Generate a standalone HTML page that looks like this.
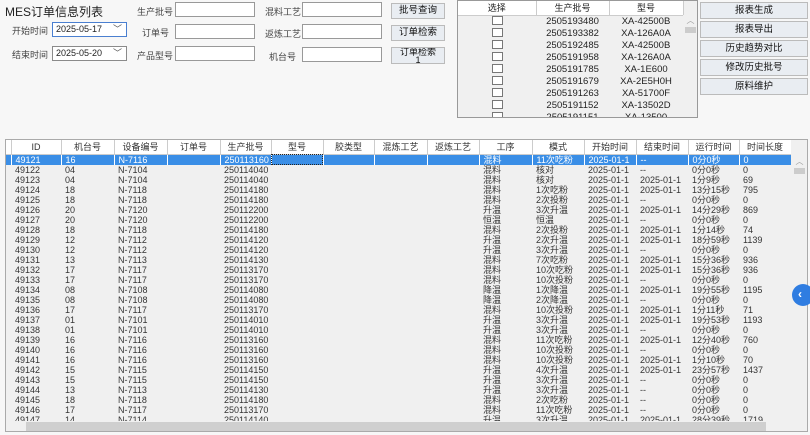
<!DOCTYPE html>
<html><head><meta charset="utf-8"><style>
*{box-sizing:border-box;margin:0;padding:0}
body{width:810px;height:435px;overflow:hidden;background:#f7f7f7;font-family:"Liberation Sans","Noto Sans CJK SC",sans-serif;font-size:9px;color:#222;position:relative}
.a{position:absolute}
.lbl{position:absolute;font-size:9px;color:#444}
.inp{position:absolute;background:#fff;border:1px solid #999;height:15px}
.btn{position:absolute;background:#e9edf2;border:1px solid #bbb;font-size:9.5px;text-align:center;line-height:14px;color:#111}
.cb{position:absolute;background:#fff;border:1px solid #8a8a8a;height:15px;font-size:9px;line-height:13px;padding-left:3px}
.cb span{position:absolute;right:4px;top:0;color:#555}
table{border-collapse:collapse;table-layout:fixed}
.g td{height:10px;line-height:10px;font-size:9px;white-space:nowrap;overflow:hidden;padding-left:4px;color:#333}
.g th{height:14px;font-weight:normal;font-size:9px;border-right:1px solid #ccc;border-bottom:1px solid #ccc;background:#fff;color:#333}
.g tr.s td{background:#3a8ee6;color:#fff;border-right:1px solid #fff}
.l td{height:12px;line-height:12px;font-size:9.5px;text-align:center;color:#222}
.l th{height:14px;font-weight:normal;font-size:9px;border-right:1px solid #ccc;border-bottom:1px solid #ccc;background:#fff}
.chk{display:inline-block;width:11px;height:9px;border:1px solid #777;background:#fff;vertical-align:middle}
</style></head><body>
<div class="a" style="left:5px;top:3px;font-size:12px;color:#222">MES订单信息列表</div>
<div class="lbl" style="left:12px;top:24px">开始时间</div>
<div class="lbl" style="left:12px;top:48px">结束时间</div>
<div class="cb" style="left:52px;top:22px;width:75px;border-color:#4a7fd0">2025-05-17<span>﹀</span></div>
<div class="cb" style="left:52px;top:46px;width:75px">2025-05-20<span>﹀</span></div>
<div class="lbl" style="left:137px;top:5px">生产批号</div>
<div class="lbl" style="left:142px;top:26px">订单号</div>
<div class="lbl" style="left:137px;top:49px">产品型号</div>
<div class="inp" style="left:175px;top:2px;width:80px"></div>
<div class="inp" style="left:175px;top:24px;width:80px"></div>
<div class="inp" style="left:175px;top:46px;width:80px"></div>
<div class="lbl" style="left:265px;top:5px">混料工艺</div>
<div class="lbl" style="left:265px;top:27px">返炼工艺</div>
<div class="lbl" style="left:269px;top:50px">机台号</div>
<div class="inp" style="left:302px;top:2px;width:80px"></div>
<div class="inp" style="left:302px;top:24px;width:80px"></div>
<div class="inp" style="left:302px;top:47px;width:80px"></div>
<div class="btn" style="left:391px;top:3px;width:54px;height:16px">批号查询</div>
<div class="btn" style="left:391px;top:25px;width:54px;height:16px">订单检索</div>
<div class="btn" style="left:391px;top:47px;width:54px;height:17px;line-height:8px;font-size:9px;overflow:hidden">订单检索<br>1</div>

<div class="a" style="left:457px;top:0;width:241px;height:118px;background:#f0f0f0;border:1px solid #999;overflow:hidden">
<table class="l" style="width:225px"><colgroup><col style="width:78px"><col style="width:73px"><col style="width:74px"></colgroup>
<tr><th>选择</th><th>生产批号</th><th>型号</th></tr>
<tr><td><span class="chk"></span></td><td>2505193480</td><td>XA-42500B</td></tr>
<tr><td><span class="chk"></span></td><td>2505193382</td><td>XA-126A0A</td></tr>
<tr><td><span class="chk"></span></td><td>2505192485</td><td>XA-42500B</td></tr>
<tr><td><span class="chk"></span></td><td>2505191958</td><td>XA-126A0A</td></tr>
<tr><td><span class="chk"></span></td><td>2505191785</td><td>XA-1E600</td></tr>
<tr><td><span class="chk"></span></td><td>2505191679</td><td>XA-2E5H0H</td></tr>
<tr><td><span class="chk"></span></td><td>2505191263</td><td>XA-51700F</td></tr>
<tr><td><span class="chk"></span></td><td>2505191152</td><td>XA-13502D</td></tr>
<tr><td><span class="chk"></span></td><td>2505191151</td><td>XA-13500</td></tr>
</table>
<div class="a" style="left:225px;top:14px;width:15px;height:104px;background:#f0f0f0;color:#999;font-size:8px;text-align:center">︿<div style="height:6px;background:#ccc;margin:1px 2px"></div></div>
</div>
<div class="btn" style="left:700px;top:2px;width:108px;height:17px;line-height:15px">报表生成</div>
<div class="btn" style="left:700px;top:21px;width:108px;height:17px;line-height:15px">报表导出</div>
<div class="btn" style="left:700px;top:40px;width:108px;height:17px;line-height:15px">历史趋势对比</div>
<div class="btn" style="left:700px;top:59px;width:108px;height:17px;line-height:15px">修改历史批号</div>
<div class="btn" style="left:700px;top:78px;width:108px;height:17px;line-height:15px">原料维护</div>

<div class="a" style="left:5px;top:139px;width:803px;height:293px;background:#f0f0f0;border:1px solid #aaa;overflow:hidden">
<table class="g" style="width:785px"><colgroup><col style="width:5px"><col style="width:50px"><col style="width:53px"><col style="width:53px"><col style="width:53px"><col style="width:51px"><col style="width:52px"><col style="width:51px"><col style="width:53px"><col style="width:52px"><col style="width:53px"><col style="width:52px"><col style="width:52px"><col style="width:52px"><col style="width:51px"><col style="width:52px"></colgroup>
<tr><th></th><th>ID</th><th>机台号</th><th>设备编号</th><th>订单号</th><th>生产批号</th><th>型号</th><th>胶类型</th><th>混炼工艺</th><th>返炼工艺</th><th>工序</th><th>模式</th><th>开始时间</th><th>结束时间</th><th>运行时间</th><th>时间长度</th></tr>
<tr class="s"><td></td><td>49121</td><td>16</td><td>N-7116</td><td></td><td>250113160</td><td style="outline:1px dotted #222;outline-offset:-1px"></td><td></td><td></td><td></td><td>混料</td><td>11次吃粉</td><td>2025-01-1</td><td>--</td><td>0分0秒</td><td>0</td></tr>
<tr><td></td><td>49122</td><td>04</td><td>N-7104</td><td></td><td>250114040</td><td></td><td></td><td></td><td></td><td>混料</td><td>核对</td><td>2025-01-1</td><td>--</td><td>0分0秒</td><td>0</td></tr>
<tr><td></td><td>49123</td><td>04</td><td>N-7104</td><td></td><td>250114040</td><td></td><td></td><td></td><td></td><td>混料</td><td>核对</td><td>2025-01-1</td><td>2025-01-1</td><td>1分9秒</td><td>69</td></tr>
<tr><td></td><td>49124</td><td>18</td><td>N-7118</td><td></td><td>250114180</td><td></td><td></td><td></td><td></td><td>混料</td><td>1次吃粉</td><td>2025-01-1</td><td>2025-01-1</td><td>13分15秒</td><td>795</td></tr>
<tr><td></td><td>49125</td><td>18</td><td>N-7118</td><td></td><td>250114180</td><td></td><td></td><td></td><td></td><td>混料</td><td>2次投粉</td><td>2025-01-1</td><td>--</td><td>0分0秒</td><td>0</td></tr>
<tr><td></td><td>49126</td><td>20</td><td>N-7120</td><td></td><td>250112200</td><td></td><td></td><td></td><td></td><td>升温</td><td>3次升温</td><td>2025-01-1</td><td>2025-01-1</td><td>14分29秒</td><td>869</td></tr>
<tr><td></td><td>49127</td><td>20</td><td>N-7120</td><td></td><td>250112200</td><td></td><td></td><td></td><td></td><td>恒温</td><td>恒温</td><td>2025-01-1</td><td>--</td><td>0分0秒</td><td>0</td></tr>
<tr><td></td><td>49128</td><td>18</td><td>N-7118</td><td></td><td>250114180</td><td></td><td></td><td></td><td></td><td>混料</td><td>2次投粉</td><td>2025-01-1</td><td>2025-01-1</td><td>1分14秒</td><td>74</td></tr>
<tr><td></td><td>49129</td><td>12</td><td>N-7112</td><td></td><td>250114120</td><td></td><td></td><td></td><td></td><td>升温</td><td>2次升温</td><td>2025-01-1</td><td>2025-01-1</td><td>18分59秒</td><td>1139</td></tr>
<tr><td></td><td>49130</td><td>12</td><td>N-7112</td><td></td><td>250114120</td><td></td><td></td><td></td><td></td><td>升温</td><td>3次升温</td><td>2025-01-1</td><td>--</td><td>0分0秒</td><td>0</td></tr>
<tr><td></td><td>49131</td><td>13</td><td>N-7113</td><td></td><td>250114130</td><td></td><td></td><td></td><td></td><td>混料</td><td>7次吃粉</td><td>2025-01-1</td><td>2025-01-1</td><td>15分36秒</td><td>936</td></tr>
<tr><td></td><td>49132</td><td>17</td><td>N-7117</td><td></td><td>250113170</td><td></td><td></td><td></td><td></td><td>混料</td><td>10次吃粉</td><td>2025-01-1</td><td>2025-01-1</td><td>15分36秒</td><td>936</td></tr>
<tr><td></td><td>49133</td><td>17</td><td>N-7117</td><td></td><td>250113170</td><td></td><td></td><td></td><td></td><td>混料</td><td>10次投粉</td><td>2025-01-1</td><td>--</td><td>0分0秒</td><td>0</td></tr>
<tr><td></td><td>49134</td><td>08</td><td>N-7108</td><td></td><td>250114080</td><td></td><td></td><td></td><td></td><td>降温</td><td>1次降温</td><td>2025-01-1</td><td>2025-01-1</td><td>19分55秒</td><td>1195</td></tr>
<tr><td></td><td>49135</td><td>08</td><td>N-7108</td><td></td><td>250114080</td><td></td><td></td><td></td><td></td><td>降温</td><td>2次降温</td><td>2025-01-1</td><td>--</td><td>0分0秒</td><td>0</td></tr>
<tr><td></td><td>49136</td><td>17</td><td>N-7117</td><td></td><td>250113170</td><td></td><td></td><td></td><td></td><td>混料</td><td>10次投粉</td><td>2025-01-1</td><td>2025-01-1</td><td>1分11秒</td><td>71</td></tr>
<tr><td></td><td>49137</td><td>01</td><td>N-7101</td><td></td><td>250114010</td><td></td><td></td><td></td><td></td><td>升温</td><td>3次升温</td><td>2025-01-1</td><td>2025-01-1</td><td>19分53秒</td><td>1193</td></tr>
<tr><td></td><td>49138</td><td>01</td><td>N-7101</td><td></td><td>250114010</td><td></td><td></td><td></td><td></td><td>升温</td><td>3次升温</td><td>2025-01-1</td><td>--</td><td>0分0秒</td><td>0</td></tr>
<tr><td></td><td>49139</td><td>16</td><td>N-7116</td><td></td><td>250113160</td><td></td><td></td><td></td><td></td><td>混料</td><td>11次吃粉</td><td>2025-01-1</td><td>2025-01-1</td><td>12分40秒</td><td>760</td></tr>
<tr><td></td><td>49140</td><td>16</td><td>N-7116</td><td></td><td>250113160</td><td></td><td></td><td></td><td></td><td>混料</td><td>10次投粉</td><td>2025-01-1</td><td>--</td><td>0分0秒</td><td>0</td></tr>
<tr><td></td><td>49141</td><td>16</td><td>N-7116</td><td></td><td>250113160</td><td></td><td></td><td></td><td></td><td>混料</td><td>10次投粉</td><td>2025-01-1</td><td>2025-01-1</td><td>1分10秒</td><td>70</td></tr>
<tr><td></td><td>49142</td><td>15</td><td>N-7115</td><td></td><td>250114150</td><td></td><td></td><td></td><td></td><td>升温</td><td>4次升温</td><td>2025-01-1</td><td>2025-01-1</td><td>23分57秒</td><td>1437</td></tr>
<tr><td></td><td>49143</td><td>15</td><td>N-7115</td><td></td><td>250114150</td><td></td><td></td><td></td><td></td><td>升温</td><td>3次升温</td><td>2025-01-1</td><td>--</td><td>0分0秒</td><td>0</td></tr>
<tr><td></td><td>49144</td><td>13</td><td>N-7113</td><td></td><td>250114130</td><td></td><td></td><td></td><td></td><td>升温</td><td>3次升温</td><td>2025-01-1</td><td>--</td><td>0分0秒</td><td>0</td></tr>
<tr><td></td><td>49145</td><td>18</td><td>N-7118</td><td></td><td>250114180</td><td></td><td></td><td></td><td></td><td>混料</td><td>2次吃粉</td><td>2025-01-1</td><td>--</td><td>0分0秒</td><td>0</td></tr>
<tr><td></td><td>49146</td><td>17</td><td>N-7117</td><td></td><td>250113170</td><td></td><td></td><td></td><td></td><td>混料</td><td>11次吃粉</td><td>2025-01-1</td><td>--</td><td>0分0秒</td><td>0</td></tr>
<tr><td></td><td>49147</td><td>14</td><td>N-7114</td><td></td><td>250114140</td><td></td><td></td><td></td><td></td><td>升温</td><td>3次升温</td><td>2025-01-1</td><td>2025-01-1</td><td>28分39秒</td><td>1719</td></tr>
</table>
<div class="a" style="left:785px;top:0;width:17px;height:281px;background:#f0f0f0;color:#999;font-size:8px;text-align:center;padding-top:16px">︿<div style="height:6px;background:#ccc;margin:1px 3px"></div></div>
<div class="a" style="left:0;top:281px;width:785px;height:11px;background:#f0f0f0"><div style="position:absolute;left:20px;top:1px;width:740px;height:9px;background:#cfcfcf"></div></div>
</div>
<div class="a" style="left:792px;top:284px;width:22px;height:22px;border-radius:11px;background:#2f7de1;color:#fff;font-size:12px;font-weight:bold;line-height:21px;padding-left:6px">‹</div>
</body></html>
